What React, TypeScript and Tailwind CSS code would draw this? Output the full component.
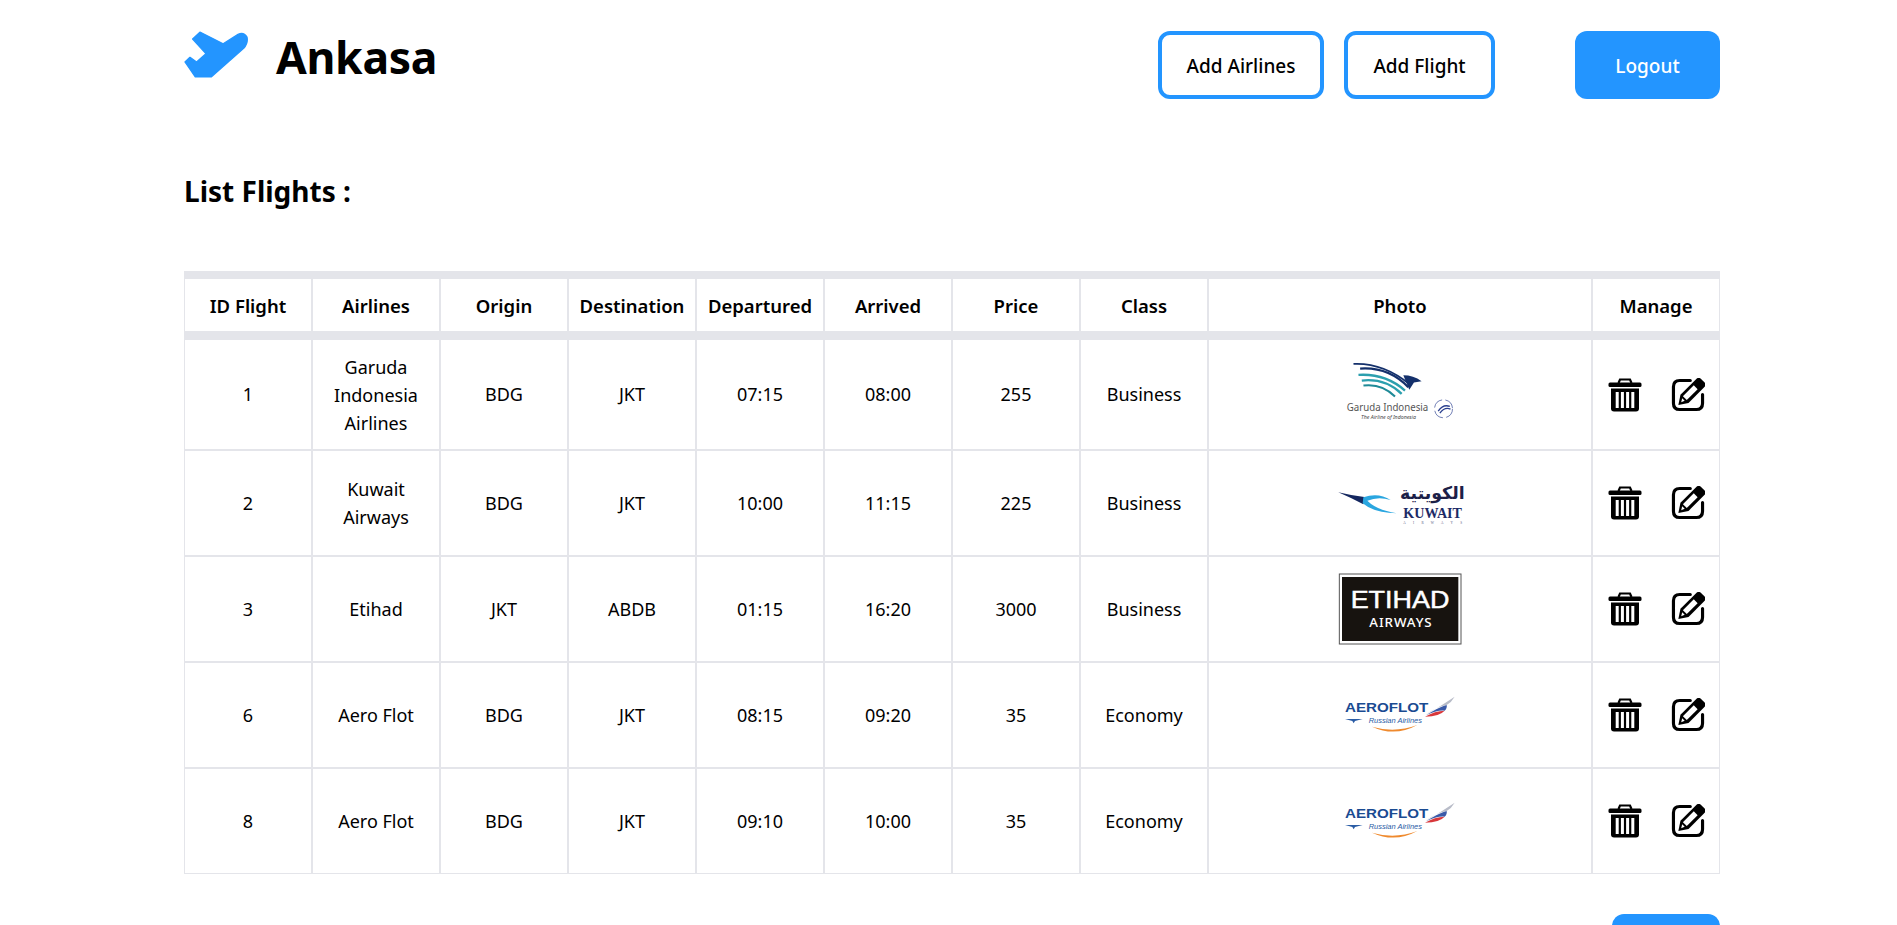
const FLIGHTS = [
  { id: 1, airline: 'Garuda Indonesia Airlines', origin: 'BDG', dest: 'JKT', dep: '07:15', arr: '08:00', price: 255, cls: 'Business', logo: 'garuda' },
  { id: 2, airline: 'Kuwait Airways', origin: 'BDG', dest: 'JKT', dep: '10:00', arr: '11:15', price: 225, cls: 'Business', logo: 'kuwait' },
  { id: 3, airline: 'Etihad', origin: 'JKT', dest: 'ABDB', dep: '01:15', arr: '16:20', price: 3000, cls: 'Business', logo: 'etihad' },
  { id: 6, airline: 'Aero Flot', origin: 'BDG', dest: 'JKT', dep: '08:15', arr: '09:20', price: 35, cls: 'Economy', logo: 'aeroflot' },
  { id: 8, airline: 'Aero Flot', origin: 'BDG', dest: 'JKT', dep: '09:10', arr: '10:00', price: 35, cls: 'Economy', logo: 'aeroflot' },
]

const HEADERS = ['ID Flight', 'Airlines', 'Origin', 'Destination', 'Departured', 'Arrived', 'Price', 'Class']

const thClass = 'border-x border-y-8 border-[#e4e5ea] pt-[2px] text-[18.5px] font-semibold'
const tdClass = 'border border-[#e4e5ea]'

function PlaneLogo() {
  return (
    <svg viewBox="42 62 193 141" className="h-[47px] w-[64px]">
      <path
        d="M68 86 L90 65 L160 100 L205 72 Q222 64 232 80 Q236 98 222 114 L124 200 L76 200 L45 155 L60 141 L80 155 L108 130 Z"
        fill="#2395ff"
        stroke="#2395ff"
        strokeWidth="4"
        strokeLinejoin="round"
      />
    </svg>
  )
}

function TrashIcon() {
  return (
    <svg viewBox="0 0 34 34" className="h-[34px] w-[34px]">
      <path d="M10.5 5 L12 1.5 H22 L23.5 5" fill="none" stroke="#000" strokeWidth="2.2" />
      <rect x="0.5" y="4.5" width="33" height="4.5" rx="1.5" fill="#000" />
      <path d="M3 10.5 H31 V30.5 Q31 33.5 28 33.5 H6 Q3 33.5 3 30.5 Z" fill="#000" />
      <rect x="7.7" y="14" width="3" height="16" fill="#fff" />
      <rect x="12.9" y="14" width="3" height="16" fill="#fff" />
      <rect x="18.1" y="14" width="3" height="16" fill="#fff" />
      <rect x="23.3" y="14" width="3" height="16" fill="#fff" />
    </svg>
  )
}

function EditIcon() {
  return (
    <svg viewBox="243 53 97 97" className="h-[34px] w-[34px]">
      <path
        d="M298 60 H268 Q250 60 250 78 V125 Q250 143 268 143 H315 Q333 143 333 125 V100"
        fill="none"
        stroke="#000"
        strokeWidth="9"
        strokeLinecap="round"
      />
      <path d="M264 130 L270 101 L316 55 Q322 50 328 55 L339 66 Q344 72 339 78 L293 124 Z" fill="#000" />
      <path d="M277 105 L308 74 L319 85 L288 116 Z" fill="#fff" />
      <path d="M272 122 L275 111 L282 118 Z" fill="#fff" />
    </svg>
  )
}

function GarudaLogo() {
  return (
    <svg viewBox="0 10 540 304" className="h-[101px] w-[180px]">
      <path d="M130 70 Q220 66 300 132" fill="none" stroke="#14306b" strokeWidth="5" />
      <path d="M150 84 Q235 78 295 140" fill="none" stroke="#14306b" strokeWidth="7" />
      <path d="M145 103 Q225 98 285 150" fill="none" stroke="#2b9fae" strokeWidth="7" />
      <path d="M155 120 Q225 112 275 160" fill="none" stroke="#2b9fae" strokeWidth="7" />
      <path d="M160 135 Q215 128 255 168" fill="none" stroke="#1f8a97" strokeWidth="6" />
      <path d="M280 104 Q310 104 335 122 L312 126 L298 148 Z" fill="#14306b" />
      <text x="110" y="213" fontFamily="'Noto Sans', sans-serif" fontSize="34" textLength="245" lengthAdjust="spacingAndGlyphs" fill="#555">Garuda Indonesia</text>
      <text x="153" y="237" fontFamily="'Noto Sans', sans-serif" fontSize="16" fontStyle="italic" textLength="165" lengthAdjust="spacingAndGlyphs" fill="#444">The Airline of Indonesia</text>
      <circle cx="401" cy="205" r="27" fill="none" stroke="#2a3f8f" strokeWidth="2" strokeDasharray="34 10" />
      <path d="M385 212 Q400 190 420 198 M390 218 Q405 198 422 206" fill="none" stroke="#2a3f8f" strokeWidth="4" />
    </svg>
  )
}

function KuwaitLogo() {
  return (
    <svg viewBox="0 -6 540 270" className="h-[90px] w-[180px]">
      <path d="M85 97 Q130 108 168 112 L160 133 Q120 112 85 97 Z" fill="#14275f" />
      <path d="M160 112 Q205 96 242 120 Q205 108 172 122 Q200 150 260 160 Q190 158 158 130 Z" fill="#2aa6e0" />
      <text x="367" y="118" textAnchor="middle" direction="rtl" fontFamily="'DejaVu Sans', sans-serif" fontWeight="700" fontSize="52" fill="#1c2048">الكويتية</text>
      <text x="280" y="173" fontFamily="'Liberation Serif', serif" fontWeight="700" fontSize="41" textLength="176" lengthAdjust="spacingAndGlyphs" fill="#1c2a66">KUWAIT</text>
      <text x="280" y="192" fontFamily="'Liberation Serif', serif" fontSize="10" textLength="176" fill="#555a80">AIRWAYS</text>
    </svg>
  )
}

function EtihadLogo() {
  return (
    <svg viewBox="0 9 540 270" className="h-[90px] w-[180px]">
      <rect x="88" y="39" width="365" height="210" fill="#fff" stroke="#555" strokeWidth="3" />
      <rect x="96" y="48" width="349" height="192" fill="#17130f" />
      <text x="122" y="141" fontFamily="'Liberation Sans', sans-serif" fontSize="72" textLength="296" lengthAdjust="spacingAndGlyphs" stroke="#fff" strokeWidth="1.5" fill="#fff">ETIHAD</text>
      <text x="178" y="199" fontFamily="'Noto Sans', sans-serif" fontWeight="500" fontSize="40" textLength="187" fill="#fff">AIRWAYS</text>
    </svg>
  )
}

function AeroflotLogo() {
  return (
    <svg viewBox="0 0 540 210" className="h-[70px] w-[180px]">
      <text x="105" y="97" fontFamily="'Liberation Sans', sans-serif" fontWeight="700" fontSize="38" textLength="250" lengthAdjust="spacingAndGlyphs" fill="#1a4b92">AEROFLOT</text>
      <text x="176" y="129" fontFamily="'Liberation Sans', sans-serif" fontStyle="italic" fontSize="23" textLength="160" lengthAdjust="spacingAndGlyphs" fill="#2a5ca5">Russian Airlines</text>
      <path d="M105 117 H158 L135 123 L131 130 L127 123 Z" fill="#2a5ca5" />
      <path d="M186 140 Q255 160 322 135 Q255 172 186 140 Z" fill="#ef8a2e" />
      <path d="M345 105 Q390 80 434 50 Q425 66 410 75 Q380 80 345 105 Z" fill="#b8bcc8" />
      <path d="M348 106 Q385 82 410 75 Q412 85 404 92 Q380 90 348 106 Z" fill="#3a5aa8" />
      <path d="M345 110 Q375 92 404 92 Q390 108 345 110 Z" fill="#d8373a" />
    </svg>
  )
}

function AirlineLogo({ name }: { name: string }) {
  if (name === 'garuda') return <GarudaLogo />
  if (name === 'kuwait') return <KuwaitLogo />
  if (name === 'etihad') return <EtihadLogo />
  return <AeroflotLogo />
}

export default function App() {
  return (
    <div className="h-screen overflow-hidden bg-white font-['Noto_Sans',sans-serif] text-black">
      <div className="ml-[184px] w-[1536px] pt-[31px]">
        <header className="flex items-start">
          <PlaneLogo />
          <h1 className="ml-[28px] mt-[-2px] text-[44.5px] leading-[56px] font-bold tracking-[-0.3px]">Ankasa</h1>
          <div className="ml-auto flex gap-[20px]">
            <button className="h-[68px] w-[166px] rounded-xl border-4 border-[#2395ff] pt-[3px] text-[19px] font-medium">Add Airlines</button>
            <button className="h-[68px] w-[151px] rounded-xl border-4 border-[#2395ff] pt-[3px] text-[19px] font-medium">Add Flight</button>
            <button className="ml-[60px] h-[68px] w-[145px] rounded-xl bg-[#2395ff] pt-[3px] text-[19px] font-medium text-white">Logout</button>
          </div>
        </header>

        <h2 className="mt-[73px] text-[28px] leading-[38px] font-bold">List Flights :</h2>

        <table className="mt-[61px] w-[1536px] table-fixed border-separate border-spacing-0 text-center text-[18px]">
          <thead>
            <tr>
              {HEADERS.map((h) => (
                <th key={h} className={`h-[68px] w-[128px] ${thClass}`}>{h}</th>
              ))}
              <th className={`w-[384px] ${thClass}`}>Photo</th>
              <th className={`w-[128px] ${thClass}`}>Manage</th>
            </tr>
          </thead>
          <tbody>
            {FLIGHTS.map((f) => (
              <tr key={f.id} className={f.id === 1 ? 'h-[111px]' : 'h-[106px]'}>
                <td className={tdClass}>{f.id}</td>
                <td className={`${tdClass} px-4 leading-[28px]`}>{f.airline}</td>
                <td className={tdClass}>{f.origin}</td>
                <td className={tdClass}>{f.dest}</td>
                <td className={tdClass}>{f.dep}</td>
                <td className={tdClass}>{f.arr}</td>
                <td className={tdClass}>{f.price}</td>
                <td className={tdClass}>{f.cls}</td>
                <td className={tdClass}>
                  <div className="flex justify-center"><AirlineLogo name={f.logo} /></div>
                </td>
                <td className={tdClass}>
                  <div className="flex items-center justify-center gap-[29px]">
                    <TrashIcon />
                    <EditIcon />
                  </div>
                </td>
              </tr>
            ))}
          </tbody>
        </table>

        <div className="mt-[40px] flex justify-end">
          <div className="h-[68px] w-[108px] rounded-xl bg-[#2395ff]" />
        </div>
      </div>
    </div>
  )
}
